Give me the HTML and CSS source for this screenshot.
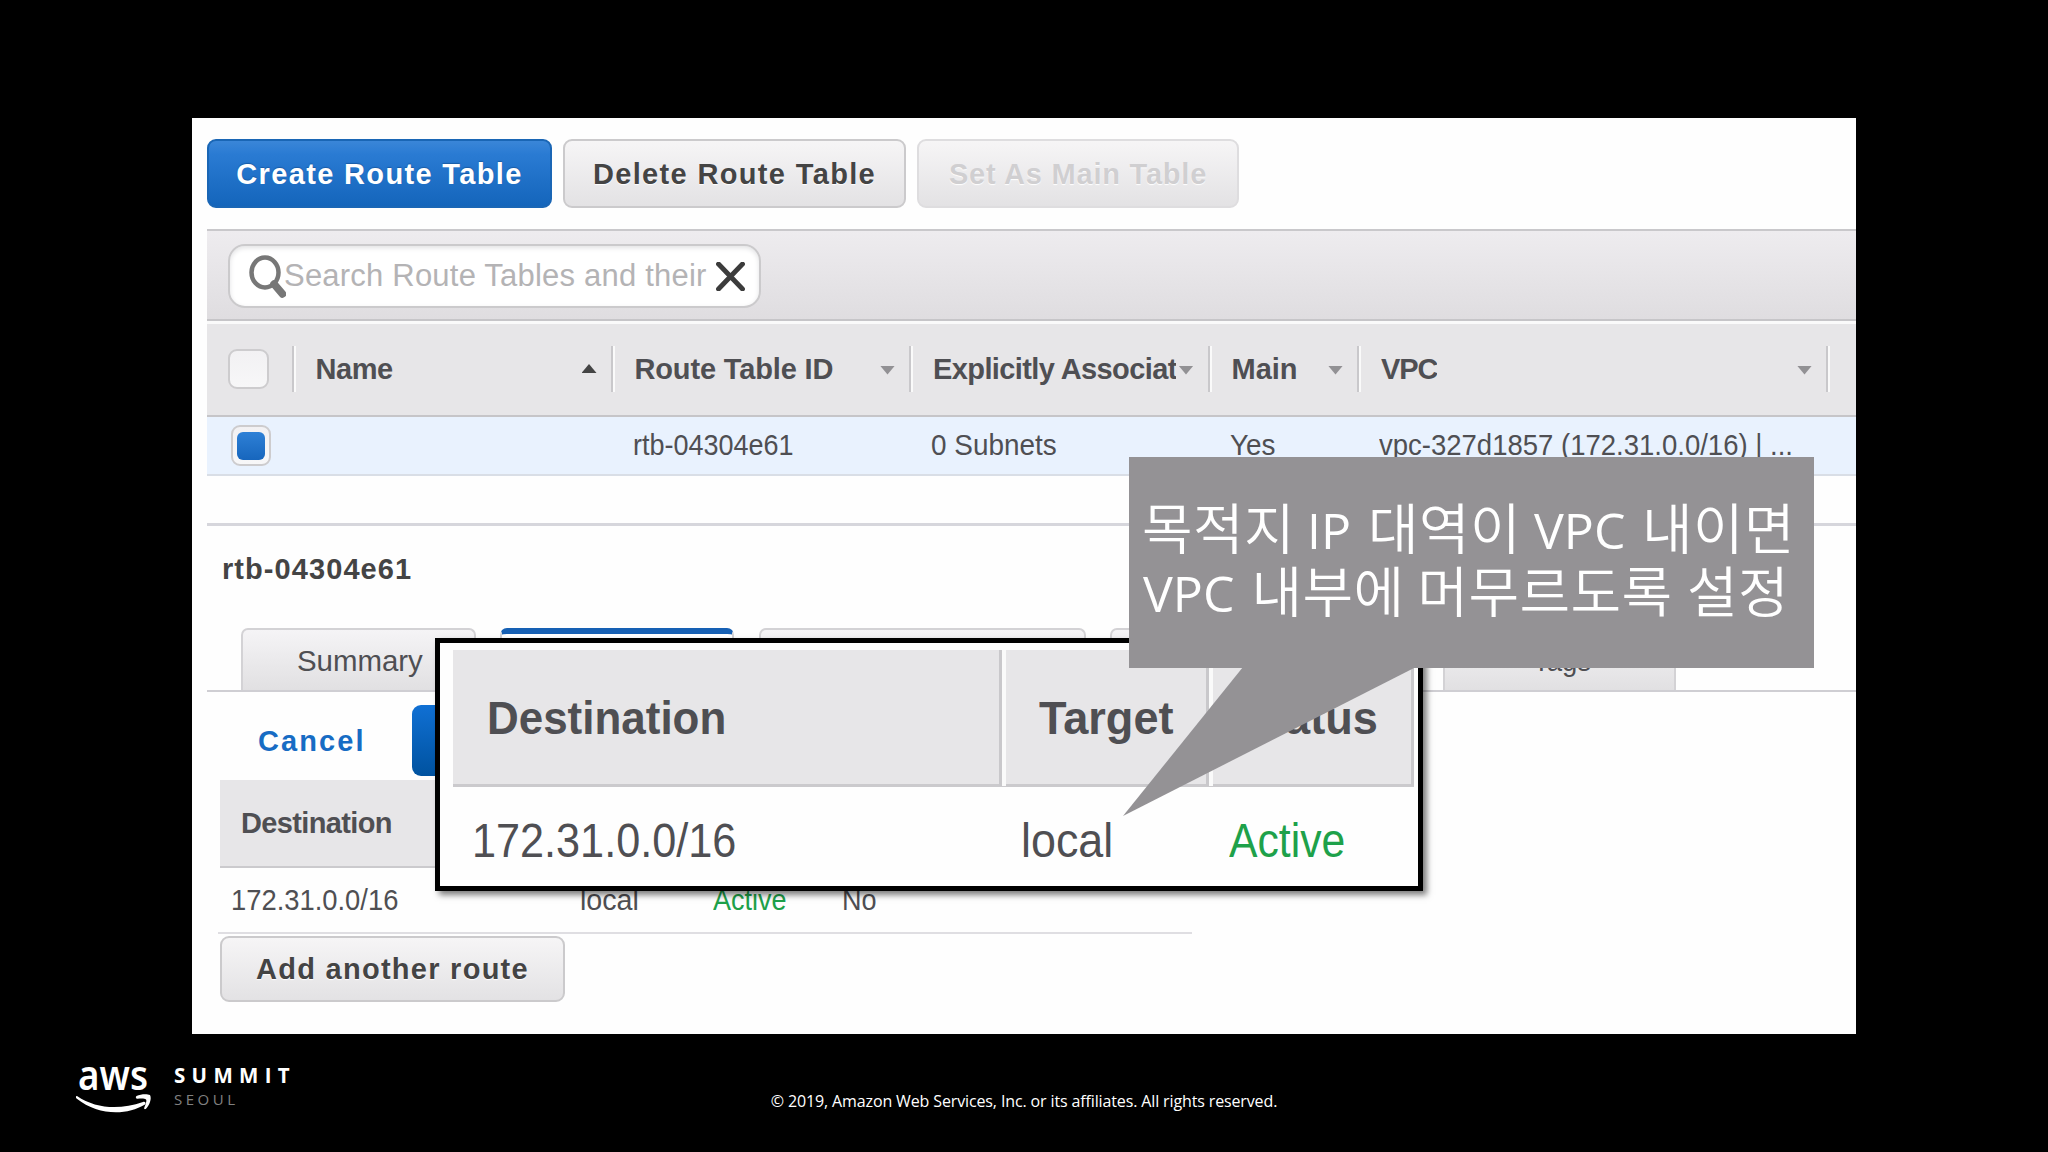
FILE: index.html
```html
<!DOCTYPE html>
<html lang="ko">
<head>
<meta charset="utf-8">
<title>VPC Route Tables</title>
<link rel="stylesheet" href="styles.css">
</head>
<body>
<main class="slide">
  <section class="console">
    <div class="buttons">
      <button class="btn primary create">Create Route Table</button>
      <button class="btn delete">Delete Route Table</button>
      <button class="btn disabled set-main">Set As Main Table</button>
    </div>

    <div class="toolbar">
      <div class="search">
        <svg class="lens" viewBox="0 0 38 44"><ellipse cx="17" cy="17.500" rx="13.500" ry="15" fill="none" stroke="#777" stroke-width="4.500"/><path d="M26 29 L34.500 39" stroke="#777" stroke-width="7.500" stroke-linecap="round"/></svg>
        <span class="placeholder">Search Route Tables and their</span>
        <svg class="clear" viewBox="0 0 29 29"><path d="M2.500 2 L26.500 27 M26.500 2 L2.500 27" stroke="#3c3c3c" stroke-width="4.800" stroke-linecap="round"/></svg>
      </div>
    </div>

    <div class="grid head">
      <div class="check-cell"><span class="checkbox"></span></div>
      <div class="cell"><span class="name">Name</span><i class="sort up"></i></div>
      <div class="cell"><span class="rtid">Route Table ID</span><i class="sort"></i></div>
      <div class="cell"><span class="assoc">Explicitly Associat</span><i class="sort"></i></div>
      <div class="cell"><span>Main</span><i class="sort"></i></div>
      <div class="cell"><span class="vpc-head">VPC</span><i class="sort"></i></div>
      <div class="cell"></div>
    </div>
    <div class="grid row">
      <div class="check-cell"><span class="checkbox checked"></span></div>
      <div></div>
      <div><span class="fit w90">rtb-04304e61</span></div>
      <div><span class="fit w93">0 Subnets</span></div>
      <div><span class="fit w93">Yes</span></div>
      <div><span class="fit w92">vpc-327d1857 (172.31.0.0/16) | ...</span></div>
      <div></div>
    </div>

    <div class="detail">
      <h2>rtb-04304e61</h2>
      <div class="tabs">
        <div class="tab summary"><span class="fit w98">Summary</span></div>
        <div class="tab active"></div>
        <div class="tab wide"></div>
        <div class="tab wider"></div>
        <div class="tab tags"><span class="fit w92">Tags</span></div>
      </div>
      <div class="actions"><a class="cancel">Cancel</a><span class="save"></span></div>
      <div class="routes">
        <div class="routes-head"><span>Destination</span></div>
        <div class="routes-row">
          <span class="fit w91">172.31.0.0/16</span><span class="fit w95">local</span><span class="fit w90 ok">Active</span><span class="fit w90">No</span>
        </div>
      </div>
      <button class="btn add">Add another route</button>
    </div>
  </section>

  <section class="magnifier">
    <div class="mag-head">
      <div><span class="fit w94">Destination</span></div>
      <div><span class="fit w96">Target</span></div>
      <div><span class="fit w96">Status</span></div>
    </div>
    <div class="mag-row">
      <span class="fit w90">172.31.0.0/16</span><span class="fit w94">local</span><span class="fit w89 ok">Active</span>
    </div>
  </section>

  <aside class="callout">
    <svg class="tail" viewBox="0 0 300 150"><path d="M121 0 L294 0 L1 149 Z" fill="#949295"/></svg>
    <p class="line one"><span>목적지</span><b>IP</b><span>대역이</span><b>VPC</b><span>내이면</span></p>
    <p class="line two"><b>VPC</b><span>내부에</span><span>머무르도록</span><span>설정</span></p>
  </aside>

  <footer>
    <div class="brand">
      <svg class="aws" viewBox="0 0 76 58"><text x="2" y="30" textLength="70" lengthAdjust="spacingAndGlyphs">aws</text><path d="M1 36 C20 49 44 50 67 42 C69 41.200 70.500 43 69 44.500 C50 56 22 55.500 0.500 38.500 C-0.500 37 0 35.500 1 36 Z"/><path d="M60.500 36 C65 34 71 34 74 35 C76 38.500 73.500 45.500 69.800 49 C68.500 49.500 67.800 48.800 68.300 47.500 C69.800 44 71 40.500 70 39.500 C68.500 38.300 65 38.500 61.500 38.800 C59.800 39 59.300 36.900 60.500 36 Z"/></svg>
      <div class="event"><strong>SUMMIT</strong><span>SEOUL</span></div>
    </div>
    <p class="copyright">© 2019, Amazon Web Services, Inc. or its affiliates. All rights reserved.</p>
  </footer>
</main>
</body>
</html>
```
FILE: styles.css
```css
* { box-sizing: border-box; }
body { margin: 0; background: #000; }
p, h2 { margin: 0; }

.slide {
  position: relative;
  width: 2048px;
  height: 1152px;
  padding-top: 118px;
  overflow: hidden;
  background: #000;
  font-family: "Liberation Sans", Arial, sans-serif;
  color: #4f4f53;
}

.console {
  width: 1664px;
  height: 916px;
  margin-left: 192px;
  padding: 21px 0 0 15px;
  background: #fefefe;
}

/* horizontally condensed text */
.fit { display: inline-block; transform-origin: 0 50%; white-space: nowrap; }
.w89 { transform: scaleX(.89); }
.w90 { transform: scaleX(.9); }
.w91 { transform: scaleX(.912); }
.w92 { transform: scaleX(.917); }
.w93 { transform: scaleX(.93); }
.w94 { transform: scaleX(.935); }
.w95 { transform: scaleX(.955); }
.w96 { transform: scaleX(.96); }
.w98 { transform: scaleX(.98); }
.ok { color: #1ea14a; }

.buttons { display: flex; gap: 11px; height: 90px; }
.btn {
  height: 69px;
  padding: 1px 0 0;
  border: 2px solid #cbcacc;
  border-radius: 9px;
  background: linear-gradient(#f6f5f6, #e3e2e4);
  font: bold 29px/1 "Liberation Sans", Arial, sans-serif;
  letter-spacing: 1.35px;
  color: #444;
  white-space: nowrap;
  text-shadow: 0 1px 1px #fff;
}
.create { width: 345px; }
.delete { width: 343px; }
.set-main { width: 322px; letter-spacing: .78px; }
.primary {
  border-color: #1a66b5;
  background: linear-gradient(#3a86d8 0, #2a7bd3 20%, #1465bb 100%);
  color: #fff;
  text-shadow: 0 -1px 1px #1a5ca6;
}
.disabled { border-color: #dedddf; color: #d0cfd1; }

.toolbar {
  height: 92px;
  padding: 13px 0 0 21px;
  border-top: 2px solid #c9c8cb;
  border-bottom: 2px solid #c6c5c8;
  background: linear-gradient(#eeecef, #dfdde0);
}
.search {
  display: flex;
  align-items: center;
  width: 533px;
  height: 64px;
  padding-left: 18px;
  border: 2px solid #cbcacc;
  border-radius: 17px;
  background: #fff;
  box-shadow: inset 0 2px 5px #e2e2e4;
}
.lens { width: 38px; height: 44px; margin-top: 2px; }
.placeholder { width: 424px; margin-left: -2px; overflow: hidden; font-size: 31px; letter-spacing: .21px; white-space: nowrap; color: #b4b3b5; }
.clear { width: 29px; height: 29px; margin-left: 8px; }

.grid { display: grid; grid-template-columns: 84.500px 319px 298.500px 298.500px 149.500px 469px 28px; align-items: center; }
.head {
  height: 96px;
  border-top: 3px solid #fafafa;
  border-bottom: 2px solid #c6c5c8;
  background: #e7e6e8;
  font-size: 29px;
  font-weight: bold;
}
.cell, .head .check-cell { margin-top: -2px; }
.cell { display: flex; align-items: center; height: 46px; padding: 0 14px 0 0; }
.cell::before { content: ""; width: 4px; height: 46px; margin-right: 20px; flex: none; background: linear-gradient(90deg, #c9c8cb 50%, #fafafa 50%); }
.cell span { white-space: nowrap; overflow: hidden; line-height: 38px; }
.name { letter-spacing: -.45px; }
.rtid { letter-spacing: -.15px; }
.assoc { width: 242.500px; letter-spacing: -.6px; }
.vpc-head { letter-spacing: -1.100px; }
.sort { flex: none; width: 15px; height: 9px; margin-left: auto; margin-top: 3px; background: #929194; clip-path: polygon(0 0, 100% 0, 50% 100%); }
.sort.up { margin-top: 0; background: #444; clip-path: polygon(0 100%, 100% 100%, 50% 0); }

.check-cell { padding-left: 21px; }
.checkbox { display: block; width: 41px; height: 40px; border: 2px solid #cdccce; border-radius: 9px; background: linear-gradient(#f2f1f3, #f7f7f8); }
.checked { width: 40px; height: 41px; margin-left: 3px; padding: 5px 4px; }
.checked::before { content: ""; display: block; height: 28px; border-radius: 6px; background: linear-gradient(#2e80d6, #1766bd); }

.row { height: 59px; background: #e9f2fe; border-bottom: 2px solid #d9dee6; font-size: 30px; }
.row > div:not(.check-cell) { padding-left: 22px; line-height: 54px; margin-top: -2px; }

.detail { margin-top: 47px; border-top: 3px solid #d6d6dc; }
.detail h2 { height: 88px; padding-left: 15px; font-size: 29px; line-height: 86px; letter-spacing: 1.07px; color: #444; }
.tabs { display: flex; gap: 24.500px; margin-top: 14px; height: 64px; padding-left: 34px; border-bottom: 2px solid #cfced3; }
.tab { height: 62px; border: 2px solid #d3d2d5; border-bottom: 0; border-radius: 7px 7px 0 0; background: linear-gradient(#f5f4f6, #e1e0e2); font-size: 30px; line-height: 61px; }
.summary { width: 234.500px; padding-left: 54px; }
.active { width: 234px; border-top: 6px solid #1660b4; background: #fff; }
.wide { width: 327px; }
.wider { width: 308px; }
.tags { width: 233px; padding-left: 88px; }

.actions { display: flex; align-items: center; height: 71px; margin-top: 13px; padding-left: 51px; }
.cancel { width: 154px; padding-top: 2px; font-size: 29px; font-weight: bold; letter-spacing: 2.100px; color: #176cc4; }
.save { width: 120px; height: 71px; border-radius: 9px; background: linear-gradient(#1070d4, #00529f); }

.routes { width: 974px; margin: 4px 0 0 11px; }
.routes-head { height: 88px; margin-left: 2px; padding-left: 21px; border-bottom: 2px solid #cbcacd; background: #e7e6e8; font-size: 29px; font-weight: bold; line-height: 87px; letter-spacing: -.64px; }
.routes-row { display: grid; grid-template-columns: 349px 133px 129px 1fr; padding-left: 13px; height: 66px; border-bottom: 2px solid #dfdee2; font-size: 30px; line-height: 64px; }
.add { width: 345px; height: 66px; margin: 2px 0 0 13px; letter-spacing: 1.27px; }

.magnifier {
  position: absolute;
  left: 435px;
  top: 638px;
  width: 988px;
  height: 253px;
  padding: 7px 4px 0 11px;
  border: 5px solid #000;
  background: #fefefe;
  box-shadow: 4px 4px 6px rgba(0, 0, 0, .5);
}
.mag-head { display: grid; grid-template-columns: 549px 207px 1fr; height: 137px; margin-left: 2px; border-bottom: 3px solid #cbcacd; background: #e7e6e8; font-size: 47px; font-weight: bold; line-height: 136px; }
.mag-head div { border-right: 3px solid #c9c8cb; box-shadow: inset 4px 0 #fafafa; padding-left: 37px; }
.mag-head div:first-child { padding-left: 34px; box-shadow: none; }
.mag-head div:last-child { padding-left: 31px; }
.mag-row { display: grid; grid-template-columns: 549px 208px 1fr; padding-left: 21px; font-size: 48px; line-height: 107px; }

.callout {
  position: absolute;
  left: 1129px;
  top: 457px;
  width: 685px;
  height: 211px;
  padding-top: 37px;
  background: #949295;
  color: #fff;
}
.tail { position: absolute; left: -7px; top: 210px; width: 300px; height: 150px; }
.line { display: grid; height: 62.500px; line-height: 62.500px; font-family: "Noto Sans CJK KR", sans-serif; font-size: 55px; font-weight: 350; letter-spacing: .4px; white-space: nowrap; align-items: baseline; }
.line b { font: 500 50px/62px "Open Sans", "Noto Sans", sans-serif; letter-spacing: 0; }
.one { grid-template-columns: 165px 61px 166px 108px 1fr; padding-left: 13px; }
.two { grid-template-columns: 108.600px 166px 269.500px 1fr; padding-left: 14px; }

footer { display: grid; grid-template-columns: 1fr auto 1fr; height: 118px; font-family: "Open Sans", "Noto Sans", sans-serif; color: #fff; }
.brand { display: flex; gap: 22px; padding: 26px 0 0 76px; }
.aws { width: 76px; height: 58px; overflow: visible; fill: #fff; font-size: 42px; font-weight: 600; font-family: "Noto Sans", sans-serif; }
.event { display: flex; flex-direction: column; }
.event strong { font-size: 20.500px; line-height: 24px; margin-top: 3px; letter-spacing: 6.300px; }
.event span { font-size: 15px; line-height: 20px; margin-top: 2px; letter-spacing: 3.500px; color: #808080; }
.copyright { margin-top: 57px; font-size: 16px; line-height: 20px; letter-spacing: -.13px; }
```
